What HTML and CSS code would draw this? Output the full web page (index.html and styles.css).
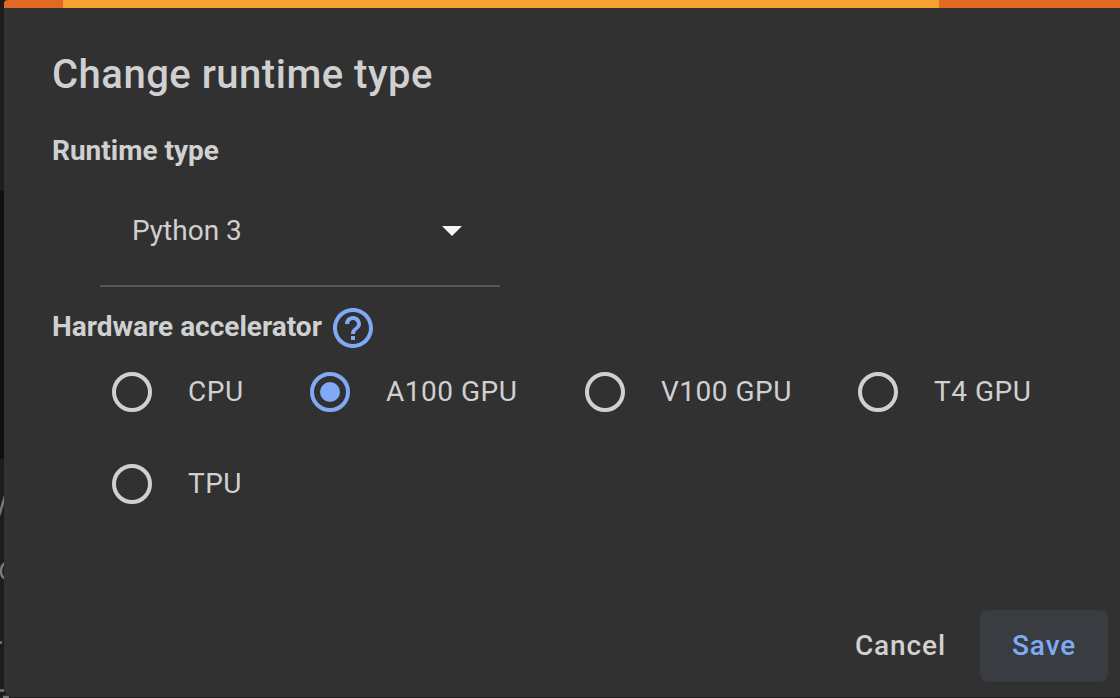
FILE: index.html
```html
<!DOCTYPE html>
<html lang="en">
<head>
<meta charset="utf-8">
<title>Change runtime type</title>
<link rel="stylesheet" href="styles.css">
</head>
<body>
<div class="page">
  <div class="backdrop">
    <div class="editor-block"></div>
    <svg class="code-edge" viewBox="0 0 12 698" width="12" height="698" fill="none" stroke="#797979" stroke-width="2.500">
      <path d="M-1 516 L5 496"/>
      <ellipse cx="6" cy="571" rx="5" ry="8"/>
      <path d="M0 642.500H2"/>
      <path d="M0 690.500H4"/>
      <path d="M3 697H9" />
    </svg>
  </div>
  <main class="dialog">
    <div class="progress"><div class="progress-bar"></div></div>
    <div class="content">
      <h1 class="title">Change runtime type</h1>
      <h2 class="label">Runtime type</h2>
      <div class="select">
        <span class="select-value">Python 3</span>
        <svg width="20" height="10" viewBox="0 0 20 10"><path d="M0 0H20L10 10Z" fill="#f5f5f5"/></svg>
      </div>
      <div class="label-row">
        <h2 class="label">Hardware accelerator</h2>
        <svg class="help" width="40" height="40" viewBox="2 2 20 20"><path fill="#80aaf5" d="M11 18h2v-2h-2v2zm1-16C6.480 2 2 6.480 2 12s4.480 10 10 10 10-4.480 10-10S17.520 2 12 2zm0 18c-4.410 0-8-3.590-8-8s3.590-8 8-8 8 3.590 8 8-3.590 8-8 8zm0-14c-2.210 0-4 1.790-4 4h2c0-1.100.9-2 2-2s2 .9 2 2c0 2-3 1.750-3 5h2c0-2.250 3-2.500 3-5 0-2.210-1.790-4-4-4z"/></svg>
      </div>
      <div class="options">
        <div class="option"><span class="radio"></span><span class="option-text">CPU</span></div>
        <div class="option"><span class="radio selected"></span><span class="option-text">A100 GPU</span></div>
        <div class="option"><span class="radio"></span><span class="option-text">V100 GPU</span></div>
        <div class="option"><span class="radio"></span><span class="option-text">T4 GPU</span></div>
        <div class="option"><span class="radio"></span><span class="option-text">TPU</span></div>
      </div>
    </div>
    <div class="actions">
      <div class="button">Cancel</div>
      <div class="button primary">Save</div>
    </div>
  </main>
</div>
</body>
</html>
```
FILE: styles.css
```css
* { box-sizing: border-box; }
body {
  margin: 0;
  font-family: Roboto, sans-serif;
  color: #d0d0d0;
  background: #1d1d1d;
  overflow: hidden;
}
.page {
  position: relative;
  height: 698px;
  padding-left: 4px;
  overflow: hidden;
}
.backdrop {
  position: absolute;
  inset: 0;
  background: #1d1d1d;
}
.editor-block {
  margin-top: 191px;
  width: 12px;
  height: 268px;
  background: #101010;
}
.code-edge {
  position: absolute;
  left: 0;
  top: 0;
}
.dialog {
  position: relative;
  display: flex;
  flex-direction: column;
  width: 1120px;
  height: 697px;
  background: #313131;
  border-radius: 4px 4px 8px 8px;
  overflow: hidden;
}
.progress {
  height: 8px;
  background: #e26924;
}
.progress-bar {
  width: 876px;
  height: 8px;
  margin-left: 59px;
  background: #f6a22f;
}
.content {
  flex: 1;
  padding: 43px 48px 0;
}
.title {
  margin: 0;
  font-size: 40px;
  line-height: 48px;
  font-weight: 500;
  letter-spacing: 0.500px;
}
.label {
  margin: 0;
  font-size: 28px;
  line-height: 40px;
  font-weight: 700;
}
.title + .label { margin-top: 32px; }
.select {
  display: flex;
  align-items: center;
  justify-content: space-between;
  width: 400px;
  height: 112px;
  margin: 4px 0 0 48px;
  padding: 2px 38px 0 32px;
  border-bottom: 2px solid #585858;
}
.select-value { font-size: 28px; line-height: 40px; }
.label-row {
  display: flex;
  gap: 11px;
  height: 40px;
  margin-top: 20px;
}
.help { margin-top: 1px; }
.options {
  display: grid;
  grid-template-columns: 198px 275px 273px 220px;
  grid-template-rows: 92px 92px;
  margin: -1px 0 0 60px;
}
.option {
  display: flex;
  align-items: center;
  gap: 36px;
  font-size: 28px;
  letter-spacing: 0.500px;
  white-space: nowrap;
}
.option-text { padding-bottom: 2px; }
.radio {
  display: grid;
  place-items: center;
  width: 40px;
  height: 40px;
  border: 4px solid #d0d0d0;
  border-radius: 50%;
}
.radio.selected { border-color: #80aaf5; }
.radio.selected::after {
  content: "";
  width: 20px;
  height: 20px;
  border-radius: 50%;
  background: #80aaf5;
}
.actions {
  display: flex;
  justify-content: flex-end;
  gap: 2px;
  padding: 0 16px 15px;
}
.button {
  height: 72px;
  padding: 0 32px;
  border-radius: 8px;
  font-size: 28px;
  line-height: 72px;
  font-weight: 500;
  letter-spacing: 0.900px;
}
.primary {
  width: 128px;
  color: #80aaf5;
  background: #393c40;
}
```
